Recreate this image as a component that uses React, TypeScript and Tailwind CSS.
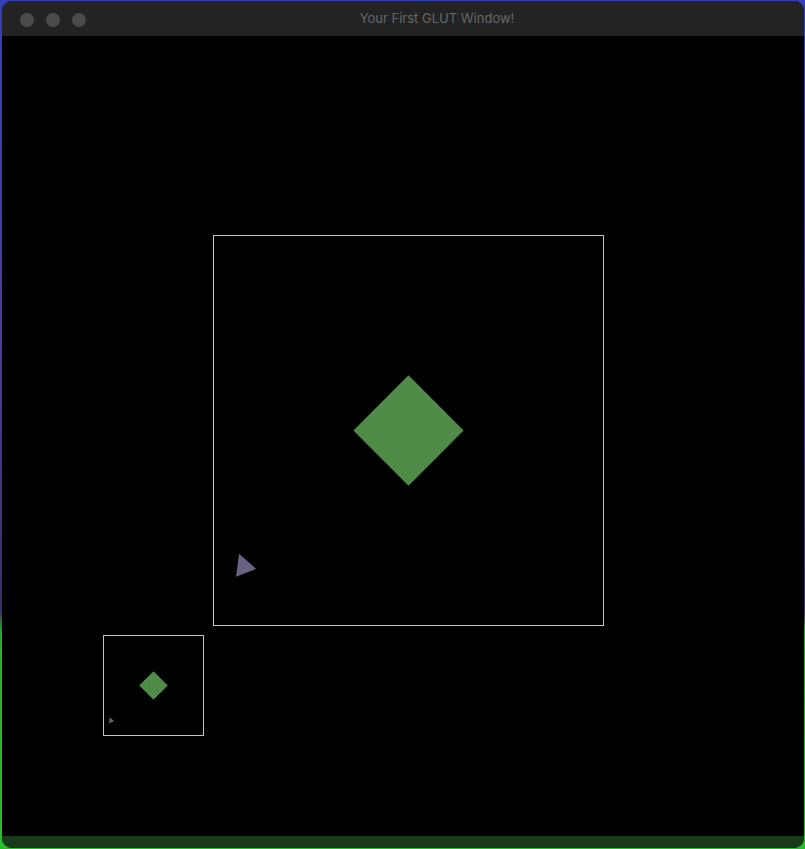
import React from "react";

// Scene drawn inside the GLUT viewport (coords relative to an 800x800 canvas)
function Scene({ size }: { size: number }) {
  const c = size / 2;
  const d = size * 0.141;
  const s = size / 390;
  return (
    <>
      <rect
        x={0.5}
        y={0.5}
        width={size - 1}
        height={size - 1}
        fill="none"
        stroke="#c4c4c4"
        strokeWidth={1}
        shapeRendering="crispEdges"
      />
      <polygon points={`${c},${c - d} ${c + d},${c} ${c},${c + d} ${c - d},${c}`} fill="#4f8c47" />
      <polygon
        points={`${26 * s},${318 * s} ${23 * s},${341 * s} ${43 * s},${333 * s}`}
        fill="#6b6281"
      />
    </>
  );
}

export default function App() {
  return (
    <div className="w-[805px] h-[849px] overflow-hidden bg-[linear-gradient(180deg,#3340b8_0%,#4a3d9c_40%,#3a2f6a_72%,#22b022_74.5%,#27c027_100%)] pt-[1px] pl-[2px]">
      <div className="w-[802px] h-[847px] rounded-[10px] overflow-hidden bg-black flex flex-col">
        <div className="h-[35px] bg-[#232323] relative flex items-center justify-center">
          <div className="absolute left-[18px] top-[12px] flex gap-[12px]">
            <span className="w-[14px] h-[14px] rounded-full bg-[#4b4b4b]" />
            <span className="w-[14px] h-[14px] rounded-full bg-[#4b4b4b]" />
            <span className="w-[14px] h-[14px] rounded-full bg-[#4b4b4b]" />
          </div>
          <span className="font-['Inter',sans-serif] text-[13px] text-[#676767] ml-[68px] mt-[1px]">
            Your First GLUT Window!
          </span>
        </div>
        <div className="h-[800px] bg-black">
          <svg width={800} height={800} viewBox="0 0 800 800">
            <g transform="translate(211 199)">
              <Scene size={391} />
            </g>
            <g transform="translate(101 599)">
              <Scene size={101} />
            </g>
          </svg>
        </div>
        <div className="flex-1 bg-[#1b3a1b]" />
      </div>
    </div>
  );
}
